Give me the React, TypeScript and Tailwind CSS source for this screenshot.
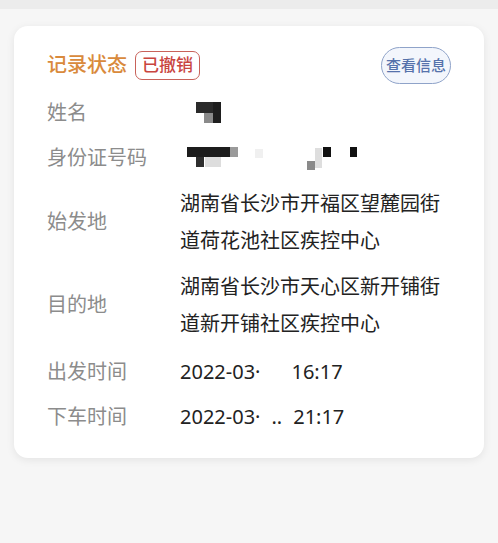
import React from 'react';

const font = { fontFamily: '"Noto Sans", "Noto Sans CJK SC", sans-serif' };

const Mosaic: React.FC<{ cells: { x: number; y: number; w: number; h: number; c: string }[]; w: number; h: number }> = ({ cells, w, h }) => (
  <div className="relative" style={{ width: w, height: h }}>
    {cells.map((c, i) => (
      <div key={i} className="absolute" style={{ left: c.x, top: c.y, width: c.w, height: c.h, background: c.c }} />
    ))}
  </div>
);

const Row: React.FC<{ label: string; children: React.ReactNode; className?: string }> = ({ label, children, className }) => (
  <div className={`flex items-center ${className ?? ''}`}>
    <div className="w-[133px] shrink-0 text-[20px] text-[#8c8c8c]">{label}</div>
    <div className="text-[20px] text-[#222] leading-[37px]">{children}</div>
  </div>
);

const App: React.FC = () => {
  return (
    <div className="w-[498px] h-[543px] bg-[#f6f6f6] overflow-hidden" style={font}>
      <div className="h-[9px] bg-[#ececec]" />
      <div className="px-[14px] pt-[17px]">
        <div className="bg-white rounded-[14px] shadow-[0_2px_8px_rgba(0,0,0,0.08)] h-[432px] pl-[33px] pr-[33px] pt-[20px]">
          <div className="flex items-center justify-between h-[38px]">
            <div className="flex items-center">
              <span className="text-[20px] text-[#d98a3c] font-medium">记录状态</span>
              <span className="ml-[8px] h-[29px] px-[6px] flex items-center rounded-[7px] border-[1.5px] border-[#c8625a] text-[17px] font-medium text-[#c9453f]">已撤销</span>
            </div>
            <span className="h-[37px] w-[70px] flex items-center justify-center rounded-full border-[1.5px] border-[#8fa3c9] bg-[#f3f6fc] text-[15px] font-medium text-[#5672ab]">查看信息</span>
          </div>
          <div className="mt-[8px] flex flex-col">
            <Row label="姓名" className="h-[41px]">
              <div className="pl-[16px]">
                <Mosaic
                  w={26}
                  h={22}
                  cells={[
                    { x: 0, y: 0, w: 25, h: 11, c: '#2a2a2a' },
                    { x: 8, y: 11, w: 9, h: 10, c: '#8a8a8a' },
                    { x: 17, y: 0, w: 8, h: 21, c: '#1e1e1e' },
                  ]}
                />
              </div>
            </Row>
            <Row label="身份证号码" className="h-[50px]">
              <div className="pl-[7px]">
                <Mosaic
                  w={172}
                  h={22}
                  cells={[
                    { x: 0, y: 0, w: 43, h: 10, c: '#1c1c1c' },
                    { x: 43, y: 0, w: 8, h: 10, c: '#9a9a9a' },
                    { x: 9, y: 10, w: 8, h: 10, c: '#2e2e2e' },
                    { x: 18, y: 10, w: 16, h: 10, c: '#dddddd' },
                    { x: 68, y: 2, w: 8, h: 9, c: '#f0f0f0' },
                    { x: 120, y: 14, w: 8, h: 9, c: '#8a8a8a' },
                    { x: 128, y: 1, w: 7, h: 20, c: '#dedede' },
                    { x: 136, y: 0, w: 8, h: 10, c: '#111111' },
                    { x: 163, y: 0, w: 7, h: 10, c: '#111111' },
                  ]}
                />
              </div>
            </Row>
            <Row label="始发地" className="mt-[2px]">
              <div>湖南省长沙市开福区望麓园街</div>
              <div>道荷花池社区疾控中心</div>
            </Row>
            <Row label="目的地" className="mt-[9px]">
              <div>湖南省长沙市天心区新开铺街</div>
              <div>道新开铺社区疾控中心</div>
            </Row>
            <Row label="出发时间" className="h-[45px] mt-[7px]">
              <span>2022-03·</span>
              <span className="ml-[31px]">16:17</span>
            </Row>
            <Row label="下车时间" className="h-[45px]">
              <span>2022-03·</span>
              <span className="ml-[11px] mr-[11px]">..</span>
              <span>21:17</span>
            </Row>
          </div>
        </div>
      </div>
    </div>
  );
};

export default App;
